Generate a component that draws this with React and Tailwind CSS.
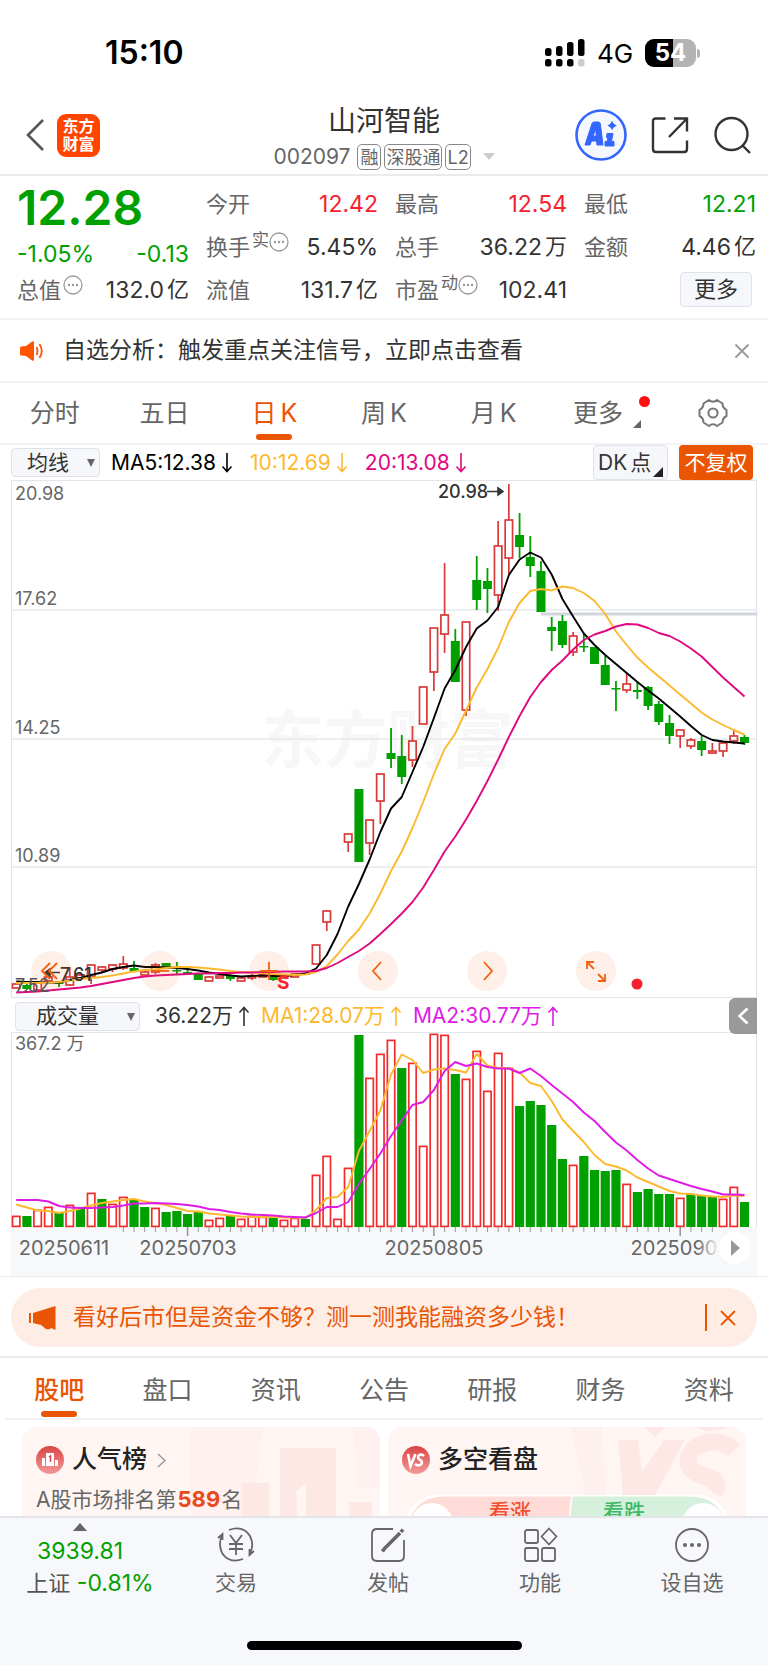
import React from 'react';

const GREEN = '#00a000';
const RED = '#d93a3a';
const VOL_RED = '#f52b2b';
const STEP = 10.71;
const FIRST_X = 16.2;

const xAt = (i) => FIRST_X + i * STEP;

// direction, body top, body bottom, wick top, wick bottom
const CANDLES = [
  ['r', 984, 988, 984, 988], ['g', 985, 989, 984, 990], ['r', 983, 990, 983, 990],
  ['r', 977, 981, 976, 982], ['g', 982, 984, 981, 987], ['r', 977, 985, 967, 986],
  ['r', 975, 978, 974, 981], ['r', 965, 977, 965, 984], ['r', 967, 970, 966, 972],
  ['r', 965, 969, 964, 972], ['r', 964, 968, 956, 970], ['g', 968, 971, 961, 971],
  ['r', 972, 975, 970, 975], ['r', 965, 972, 963, 974], ['g', 963, 967, 963, 967],
  ['g', 970, 971, 962, 974], ['g', 972, 974, 969, 974], ['g', 974, 980, 974, 980],
  ['r', 977, 981, 976, 981], ['r', 976, 978, 974, 978], ['g', 976, 979, 974, 981],
  ['r', 978, 981, 977, 981], ['r', 976, 978, 974, 980], ['r', 975, 977, 975, 977],
  ['g', 977, 980, 976, 981], ['r', 975, 978, 975, 978], ['r', 974, 977, 974, 977],
  ['g', 973, 975, 973, 975], ['r', 945, 964, 945, 964], ['r', 911, 922, 911, 931],
  ['r', 874, 874, 874, 874], ['r', 834, 842, 834, 852], ['g', 789, 862, 789, 862],
  ['r', 820, 843, 820, 855], ['r', 774, 801, 774, 824], ['g', 753, 759, 728, 768],
  ['g', 756, 777, 735, 784], ['r', 741, 760, 726, 767], ['r', 687, 724, 687, 724],
  ['r', 628, 672, 628, 691], ['r', 615, 634, 563, 653], ['g', 641, 682, 629, 682],
  ['r', 622, 710, 622, 716], ['g', 580, 600, 556, 610], ['g', 581, 589, 568, 613],
  ['r', 546, 595, 521, 611], ['r', 520, 558, 484, 574], ['g', 535, 547, 513, 558],
  ['g', 557, 566, 536, 577], ['g', 571, 612, 561, 612], ['g', 627, 631, 617, 651],
  ['g', 621, 645, 615, 648], ['r', 636, 652, 632, 656], ['g', 646, 647, 634, 652],
  ['g', 647, 664, 647, 664], ['g', 665, 685, 655, 685], ['g', 688, 689, 681, 711],
  ['r', 684, 690, 672, 693], ['g', 690, 692, 682, 699], ['g', 687, 706, 686, 710],
  ['g', 704, 722, 701, 725], ['g', 723, 736, 715, 744], ['r', 730, 736, 730, 748],
  ['r', 740, 746, 738, 749], ['g', 741, 750, 736, 756], ['r', 751, 753, 743, 753],
  ['r', 743, 751, 743, 757], ['r', 736, 741, 729, 744], ['g', 737, 743, 735, 745],
];

const MA5 = [981.5, 982, 982, 982.5, 982.5, 980, 978, 975, 972.5, 969, 967, 965.5, 967, 967, 967.5, 968, 969, 970.5, 972.5, 974, 975.5, 976.5, 976, 975.5, 976, 976, 975, 973.5, 968.5, 955, 934, 906.5, 884, 859.5, 832, 808.5, 797, 772, 747, 718, 688.5, 670, 647, 628.5, 620.5, 607, 575, 559.5, 552.5, 557.5, 574.5, 599, 616.5, 633.5, 645, 655, 664, 673, 682, 690.5, 698.5, 707.5, 716.5, 726, 735, 740, 741.5, 742.5, 743.5];
const MA10 = [983, 983, 983, 982.5, 982, 980.5, 979, 978, 977, 975.5, 973.5, 971.5, 970, 969.5, 968, 967, 967, 967.5, 968.5, 969.5, 971, 972, 972.5, 973, 974, 974.5, 975, 974.5, 972, 966, 954.5, 941, 929.5, 913.5, 893.5, 871, 851.5, 828, 802, 774, 749, 733.5, 710.5, 687.5, 669, 648, 622, 603, 591, 589, 590.5, 586.5, 588, 593, 601, 614, 631.5, 645, 657.5, 667.5, 676.5, 685.5, 694.5, 703.5, 712.5, 719.5, 725, 730, 734.5];
const MA20 = [992.5, 992, 991.5, 990.5, 989.5, 988.5, 987.5, 986, 984, 982, 980, 978, 976.5, 975.5, 975, 974.5, 974, 973.5, 973.5, 973, 973, 972.5, 972.5, 972, 972, 971.5, 971.5, 971.5, 971, 968, 963, 957, 951, 943.5, 934, 924, 913.5, 902, 887.5, 870, 851.5, 836.5, 819.5, 801, 781, 759.5, 737, 716, 697, 682, 670, 660.5, 649.5, 640, 634.5, 631, 626.5, 624, 624.5, 628, 633, 636, 641.5, 648.5, 656.5, 667, 677.5, 687, 696.5];

const VOLUMES = [
  'r1216', 'g1216', 'r1210', 'r1207', 'g1212', 'r1205', 'g1208', 'r1193', 'g1199', 'r1204',
  'r1197', 'g1200', 'g1207', 'r1208', 'g1212', 'g1211', 'g1214', 'g1211', 'r1220', 'r1218',
  'g1216', 'r1219', 'r1216', 'r1217', 'g1217', 'r1220', 'r1218', 'g1219', 'r1175', 'r1156',
  'r1219', 'r1168', 'g1035', 'r1078', 'r1054', 'r1040', 'g1068', 'r1063', 'r1146', 'r1034',
  'r1035', 'g1074', 'r1079', 'r1051', 'r1091', 'r1053', 'r1068', 'g1106', 'g1101', 'g1105',
  'g1125', 'g1159', 'r1165', 'g1156', 'g1170', 'g1171', 'g1170', 'r1184', 'g1192', 'g1189',
  'g1194', 'g1194', 'r1198', 'g1194', 'g1196', 'g1197', 'r1199', 'r1187', 'g1202',
];

const VOL_MA1 = [1204.5, 1207.5, 1210.5, 1211, 1213, 1211, 1208.5, 1205.5, 1203, 1201.5, 1200, 1199, 1201.5, 1203, 1205, 1208, 1211, 1211.5, 1213.5, 1214.5, 1215.5, 1216.5, 1217, 1217, 1217, 1217.5, 1217.5, 1218, 1210, 1198, 1197, 1187, 1151, 1131, 1110.5, 1074.5, 1054.5, 1060, 1073, 1069.5, 1068.5, 1070, 1072.5, 1054, 1065.5, 1068, 1068, 1072.5, 1083, 1086, 1101, 1119.5, 1131, 1142, 1155, 1164, 1166.5, 1170.5, 1177.5, 1182, 1186.5, 1191, 1193.5, 1194, 1195.5, 1196.5, 1197, 1195.5, 1196];
const VOL_MA2 = [1200, 1200, 1200, 1201.5, 1206, 1207.5, 1208, 1208, 1207.5, 1207, 1205.5, 1203.5, 1203.5, 1203, 1203.5, 1204, 1205, 1206.5, 1209, 1210, 1212, 1213.5, 1214.5, 1215, 1215.5, 1216.5, 1217, 1217.5, 1213, 1207, 1207, 1202, 1184, 1169, 1153.5, 1136, 1120.5, 1105, 1102, 1090, 1071, 1062, 1066, 1063.5, 1067, 1068.5, 1068.5, 1073, 1068.5, 1076, 1085, 1093.5, 1102, 1112.5, 1121, 1132, 1142.5, 1150.5, 1160, 1168.5, 1175.5, 1179, 1182.5, 1186, 1189, 1191.5, 1194.5, 1194.5, 1195];

const GRID_LINES = [
  { y: 610, label: '17.62' },
  { y: 739, label: '14.25' },
  { y: 867, label: '10.89' },
];

const PERIODS = ['分时', '五日', '日K', '周K', '月K'];
const SECTIONS = ['股吧', '盘口', '资讯', '公告', '研报', '财务', '资料'];

const Line = ({ data, color }) => (
  <polyline
    points={data.map((y, i) => `${xAt(i)},${y}`).join(' ')}
    fill="none"
    stroke={color}
    strokeWidth="1.9"
    strokeLinejoin="round"
  />
);

const Candle = ({ i, candle }) => {
  const [dir, top, bottom, high, low] = candle;
  const x = xAt(i);
  if (dir === 'g') {
    return (
      <g fill={GREEN}>
        <rect x={x - 0.9} y={high} width="1.8" height={low - high} />
        <rect x={x - 4.5} y={top} width="9" height={Math.max(bottom - top, 1.5)} />
      </g>
    );
  }
  return (
    <g fill="none" stroke={RED} strokeWidth="1.7">
      <path d={`M${x} ${high}V${top}M${x} ${bottom}V${low}`} />
      <rect x={x - 3.7} y={top} width="7.4" height={bottom - top} />
    </g>
  );
};

const PriceChart = () => (
  <svg viewBox="0 480 768 518" className="block w-full h-auto">
    <text x="261" y="762" fontSize="63" fontWeight="700" fill="#f7f7f7">东方财富</text>
    <rect x="11.5" y="480.500" width="745" height="517" fill="none" stroke="#e2e5ec" strokeWidth="1.2" />
    {GRID_LINES.map((line) => (
      <g key={line.y}>
        <path d={`M11 ${line.y}H757`} stroke="#e4e8ef" strokeWidth="1.6" />
        <text x="15" y={line.y - 5} fontSize="18" fill="#666">{line.label}</text>
      </g>
    ))}
    <text x="15" y="500" fontSize="18" fill="#666">20.98</text>
    <path d="M541 614H757" stroke="#d3d5dc" strokeWidth="3" />
    {CANDLES.map((c, i) => <Candle key={i} i={i} candle={c} />)}
    <Line data={MA5} color="#000" />
    <Line data={MA10} color="#fdb92e" />
    <Line data={MA20} color="#e0097f" />
    <text x="438" y="498" fontSize="18" fontWeight="500" fill="#333">20.98</text>
    <path d="M487 491.5H502M498 488L503 491.5L498 495Z" stroke="#333" strokeWidth="1.6" fill="#333" />
    <text x="15" y="992" fontSize="18" fill="#555">7.52</text>
    <text x="60" y="981" fontSize="18" fontWeight="500" fill="#333">7.61</text>
    <path d="M46 972.500H60M50 969L45 972.500L50 976Z" stroke="#333" strokeWidth="1.6" fill="#333" />
    <text x="277" y="989" fontSize="19" fontWeight="700" fill="#f5222d">S</text>
    <circle cx="637" cy="984" r="5.500" fill="#f5222d" />
  </svg>
);

const VolumeChart = () => (
  <svg viewBox="0 1032 768 245" className="block w-full h-auto">
    <defs>
      <linearGradient id="fadeRight" x1="0" x2="1">
        <stop offset="0" stopColor="#f7f8fa" stopOpacity="0" />
        <stop offset="1" stopColor="#f7f8fa" />
      </linearGradient>
    </defs>
    <rect x="11" y="1227" width="746" height="50" fill="#f7f8fa" />
    <path d="M11.5 1227V1032.500H756.500V1227" fill="none" stroke="#e2e5ec" strokeWidth="1.2" />
    {VOLUMES.map((v, i) => {
      const top = Number(v.slice(1));
      const x = xAt(i);
      return v[0] === 'g' ? (
        <rect key={i} x={x - 4.6} y={top} width="9.200" height={1227 - top} fill={GREEN} />
      ) : (
        <rect key={i} x={x - 3.7} y={top + 0.4} width="7.4" height={1226 - top} fill="none" stroke={VOL_RED} strokeWidth="1.7" />
      );
    })}
    <Line data={VOL_MA1} color="#fdb92e" />
    <Line data={VOL_MA2} color="#e01be8" />
    {VOLUMES.map((_, i) => {
      if (i < 10 || i > 65) return null;
      const major = i === 16 || i === 39 || i === 62;
      return <path key={i} d={`M${xAt(i)} 1227v${major ? 9 : 5}`} stroke="#999" strokeWidth={major ? 1.6 : 1} />;
    })}
    <text x="15" y="1050" fontSize="18" fill="#666">367.2 万</text>
    <g fontSize="20" fill="#666" textAnchor="middle">
      <text x="64" y="1255">20250611</text>
      <text x="188" y="1255">20250703</text>
      <text x="434" y="1255">20250805</text>
      <text x="674" y="1255">2025090</text>
    </g>
    <rect x="696" y="1238" width="24" height="22" fill="url(#fadeRight)" />
    <circle cx="735" cy="1248" r="16" fill="#fff" />
    <path d="M731 1240L740 1248L731 1256Z" fill="#999" />
    <path d="M0 1276.500H768" stroke="#e9eaf0" />
  </svg>
);

const MoreDots = () => (
  <svg width="20" height="20" viewBox="0 0 20 20" fill="none" stroke="#999" strokeWidth="1.3">
    <circle cx="10" cy="10" r="9" />
    <g fill="#999" stroke="none">
      <circle cx="6" cy="10" r="1.200" />
      <circle cx="10" cy="10" r="1.200" />
      <circle cx="14" cy="10" r="1.200" />
    </g>
  </svg>
);

const Stat = ({ label, sup, info, value, unit, color = 'text-[#333]' }) => (
  <div className="flex h-[43px] items-center justify-between">
    <div className="flex items-center gap-[2px] text-[22px] text-[#666]">
      {label}
      <span className="flex items-start self-start">
        {sup && <span className="text-[17px] leading-[18px]">{sup}</span>}
        {info && <span className="mt-px"><MoreDots /></span>}
      </span>
    </div>
    <div className={`flex gap-[3px] text-[23px] ${color}`}>
      <span>{value}</span>
      {unit && <span className="text-[22px]">{unit}</span>}
    </div>
  </div>
);

const StatusBar = () => (
  <div className="flex h-[100px] items-center justify-between pt-[6px] pr-[68px] pl-[105px]">
    <div className="text-[32px] font-semibold text-black">15:10</div>
    <div className="flex items-center">
      <svg width="40" height="28" viewBox="0 0 40 28">
        <g fill="#000">
          <rect x="0" y="9" width="6.500" height="8" rx="2.500" />
          <rect x="11" y="7" width="6.500" height="10" rx="2.500" />
          <rect x="22" y="3" width="6.500" height="14" rx="2.500" />
          <rect x="33" y="0" width="6.500" height="17" rx="2.500" />
          <rect x="0" y="20" width="6.500" height="7.500" rx="2.500" />
          <rect x="11" y="20" width="6.500" height="7.500" rx="2.500" />
          <rect x="22" y="20" width="6.500" height="7.500" rx="2.500" />
        </g>
        <rect x="33" y="20" width="6.500" height="7.500" rx="2.500" fill="#ccc" />
      </svg>
      <span className="ml-3 w-[36px] text-[26px] text-black">4G</span>
      <div className="relative ml-3 flex h-[28px] w-[51px] items-center justify-center overflow-hidden rounded-[9px] bg-[#b3b3b3]">
        <div className="absolute inset-y-0 left-0 w-[54%] bg-black" />
        <span className="relative text-[24px] font-bold text-white">54</span>
      </div>
      <div className="ml-px h-[9px] w-[3px] rounded-r-full bg-[#b3b3b3]" />
    </div>
  </div>
);

const Header = () => (
  <header className="grid h-[76px] grid-cols-[1fr_auto_1fr] items-center border-b-2 border-[#ebebeb]">
    <div className="flex items-center gap-[12px] pb-[4px] pl-[25px]">
      <button aria-label="返回">
        <svg width="20" height="32" viewBox="0 0 20 32" fill="none" stroke="#555" strokeWidth="2.600">
          <path d="M18 1L3 16L18 31" />
        </svg>
      </button>
      <div className="flex h-[43px] w-[43px] flex-col items-center justify-center rounded-[9px] bg-[#ff4400] text-[16px] leading-[18px] font-bold text-white">
        <span>东方</span>
        <span>财富</span>
      </div>
    </div>
    <div className="flex flex-col items-center pt-[2px]">
      <h1 className="text-[28px] leading-[38px] text-[#333]">山河智能</h1>
      <div className="flex h-[34px] items-center gap-[3px] text-[18px] text-[#666]">
        <span className="mr-1 text-[21px]">002097</span>
        <span className="flex h-[26px] items-center rounded-[5px] border border-[#888] px-[2px]">融</span>
        <span className="flex h-[26px] items-center rounded-[5px] border border-[#888] px-px">深股通</span>
        <span className="flex h-[26px] items-center rounded-[5px] border border-[#888] px-px">L2</span>
        <svg width="12" height="8" viewBox="0 0 12 8" className="ml-[9px]">
          <path d="M0 0H12L6 7Z" fill="#ccc" />
        </svg>
      </div>
    </div>
    <div className="flex items-center justify-end gap-[24px] pr-[17px] pb-[4px]">
      <button aria-label="AI">
        <svg width="52" height="52" viewBox="0 0 52 52">
          <circle cx="26" cy="26" r="24.500" fill="#f5f8ff" stroke="#3366ff" strokeWidth="2.600" />
          <path d="M10 36L17 14.500Q17.500 13 19 13H23.500Q25 13 25.300 14.500L28 36H22L21.600 32H16.500L15 36ZM18 27H21.200L20.800 20Z" fill="#3366ff" stroke="#3366ff" strokeLinejoin="round" />
          <path d="M32 24.500H38L36.500 32.500H39V37H30V32.500H32L33 28.500H31.500Z" fill="#3366ff" stroke="#3366ff" strokeLinejoin="round" />
          <path d="M37 11.500Q38 15 42 16.500Q38 18 37 21.500Q36 18 32.500 16.500Q36 15 37 11.500Z" fill="#3366ff" />
        </svg>
      </button>
      <button aria-label="分享">
        <svg width="38" height="38" viewBox="0 0 38 38" fill="none" stroke="#333" strokeWidth="2.400">
          <path d="M14.500 2.500H5Q2 2.500 2 5.500V33Q2 36 5 36H33Q36 36 36 33V24.500M23 2.500H36V15.500M36 2.500L18 21" />
        </svg>
      </button>
      <button aria-label="搜索">
        <svg width="38" height="38" viewBox="0 0 38 38" fill="none" stroke="#333" strokeWidth="2.400">
          <circle cx="18.500" cy="18" r="16" />
          <path d="M29 29L37 37" />
        </svg>
      </button>
    </div>
  </header>
);

const Quote = () => (
  <section className="grid grid-cols-4 gap-x-[17px] border-b-2 border-[#f3f3f5] pt-[7px] pr-[12px] pb-[6px] pl-[17px]">
    <div>
      <div className="flex h-[50px] items-center text-[48px] font-semibold text-[#00a000]">12.28</div>
      <div className="flex h-[43px] items-center justify-between text-[23px] text-[#00a000]">
        <span>-1.05%</span>
        <span>-0.13</span>
      </div>
      <div className="-mt-[7px]">
        <Stat label="总值" info value="132.0" unit="亿" />
      </div>
    </div>
    <div>
      <Stat label="今开" value="12.42" color="text-[#f5222d]" />
      <Stat label="换手" sup="实" info value="5.45%" />
      <Stat label="流值" value="131.7" unit="亿" />
    </div>
    <div>
      <Stat label="最高" value="12.54" color="text-[#f5222d]" />
      <Stat label="总手" value="36.22" unit="万" />
      <Stat label="市盈" sup="动" info value="102.41" />
    </div>
    <div>
      <Stat label="最低" value="12.21" color="text-[#00a000]" />
      <Stat label="金额" value="4.46" unit="亿" />
      <div className="flex h-[40px] items-center justify-end pr-1">
        <button className="h-[35px] w-[72px] rounded-[4px] border border-[#dfe2e8] bg-[#f6f7fa] text-[22px] leading-[30px] text-[#333]">更多</button>
      </div>
    </div>
  </section>
);

const Notice = () => (
  <div className="flex h-[63px] items-center border-b-2 border-[#f3f3f5] pr-[18px] pl-[20px]">
    <svg width="24" height="22" viewBox="0 0 24 22">
      <path d="M1 6.500Q0 7 0 8V14Q0 15 1 15.500L6 16L12 20.500Q14 21.500 14 19V3Q14 .5 12 1.500L6 6Z" fill="#ff5500" />
      <path d="M16.500 7Q18.500 11 16.500 15M19.500 4Q24 11 19.500 18" fill="none" stroke="#ff5500" strokeWidth="1.800" />
    </svg>
    <p className="ml-[19px] flex-1 text-[23px] text-[#333]">自选分析：触发重点关注信号，立即点击查看</p>
    <button aria-label="关闭">
      <svg width="16" height="16" viewBox="0 0 16 16" stroke="#999" strokeWidth="1.800">
        <path d="M1.500 1.500L14.500 14.500M14.500 1.500L1.500 14.500" />
      </svg>
    </button>
  </div>
);

const PeriodTabs = () => (
  <nav className="grid h-[62px] grid-cols-7 border-b-2 border-[#f3f3f5] text-[25px] text-[#666]">
    {PERIODS.map((name) => (
      <button
        key={name}
        className={name === '日K' ? 'relative flex items-center justify-center pt-px text-[#ea5504]' : 'flex items-center justify-center pt-px'}
      >
        {name[1] === 'K' ? <span className="flex gap-1"><span>{name[0]}</span><span>K</span></span> : name}
        {name === '日K' && <span className="absolute bottom-[3px] h-[6px] w-[36px] rounded-[3px] bg-[#ea5504]" />}
      </button>
    ))}
    <button className="relative flex items-center justify-center gap-[10px] pt-px pl-[7px]">
      更多
      <svg width="8" height="8" viewBox="0 0 8 8" className="mt-5"><path d="M0 8L8 0V8Z" fill="#666" /></svg>
      <span className="absolute top-[13px] right-[8px] h-[11px] w-[11px] rounded-full bg-[#ff1010]" />
    </button>
    <button aria-label="设置" className="flex items-center justify-center">
      <svg width="30" height="30" viewBox="0 0 30 30" fill="none" stroke="#777" strokeWidth="2">
        <path d="M11 2Q15 5.500 19 2L24.500 5.500Q24.500 10 28.500 12V18Q24.500 20 24.500 24.500L19 28Q15 24.500 11 28L5.500 24.500Q5.500 20 1.500 18V12Q5.500 10 5.500 5.500Z" strokeLinejoin="round" />
        <circle cx="15" cy="15" r="4.600" />
      </svg>
    </button>
  </nav>
);

const Arrow = ({ up }) => (
  <svg width="12" height="21" viewBox="0 0 12 21" fill="none" stroke="currentColor" strokeWidth="1.600">
    <path d={up ? 'M6 20V2M1.500 6.500L6 1.500L10.500 6.500' : 'M6 1V19M1.500 14.500L6 19.500L10.500 14.500'} />
  </svg>
);

const Picker = ({ label, option, width }) => (
  <div className="relative">
    <select
      aria-label={label}
      className={`block h-[29px] appearance-none rounded-[4px] border border-[#dfe2e8] bg-[#f6f7fa] text-[21px] leading-[26px] text-[#333] ${width}`}
    >
      <option>{option}</option>
    </select>
    <svg width="8" height="8" viewBox="0 0 8 8" className="pointer-events-none absolute top-[11px] right-[5px]">
      <path d="M0 0H8L4 8Z" fill="#666" />
    </svg>
  </div>
);

const IndicatorBar = () => (
  <div className="flex h-[35px] items-center pr-[15px] pl-[11px] text-[21px]">
    <Picker label="指标" option="均线" width="w-[89px] pl-[15px]" />
    <span className="ml-[11px] flex items-center gap-[5px] text-black">MA5:12.38<Arrow /></span>
    <span className="ml-[17px] flex items-center gap-[5px] text-[#fdb92e]">10:12.69<Arrow /></span>
    <span className="ml-[17px] flex items-center gap-[5px] text-[#e0097f]">20:13.08<Arrow /></span>
    <button className="relative ml-auto flex h-[35px] w-[75px] items-center gap-[3px] rounded-[4px] border border-[#dfe2e8] bg-[#f6f7fa] pl-[4px] text-[21px] text-[#333]">
      <span>DK</span><span>点</span>
      <svg width="10" height="10" viewBox="0 0 10 10" className="absolute right-[4px] bottom-[2px]"><path d="M0 10L10 0V10Z" fill="#222" /></svg>
    </button>
    <button className="ml-[11px] h-[35px] w-[74px] rounded-[4px] bg-[#ea5504] text-[21px] leading-[30px] text-white">不复权</button>
  </div>
);

const CONTROLS = [
  { name: '最早', d: 'M19 12L11 20L19 28M26 12L18 20L26 28' },
  { name: '缩小', d: 'M11 20H29' },
  { name: '放大', d: 'M11 20H29M20 11V29' },
  { name: '向前', d: 'M23 11L15 20L23 29' },
  { name: '向后', d: 'M17 11L25 20L17 29' },
  { name: '全屏', d: 'M11 18V11H18M11 11L18 18M29 23V30H22M29 30L22 23' },
];

const ChartControls = () => (
  <div className="absolute bottom-[7px] left-[31px] flex gap-[69px]">
    {CONTROLS.map((c) => (
      <button key={c.name} aria-label={c.name} className="h-[40px] w-[40px] rounded-full bg-[#f26020]/10">
        <svg width="40" height="40" viewBox="0 0 40 40" fill="none" stroke="#f26010" strokeWidth="1.800">
          <path d={c.d} />
        </svg>
      </button>
    ))}
  </div>
);

const VolumeBar = () => (
  <div className="flex h-[34px] items-center pt-[2px] pr-[11px] pl-[15px] text-[21px]">
    <Picker label="副图指标" option="成交量" width="w-[125px] pl-[20px]" />
    <span className="ml-[15px] flex items-center gap-[5px] text-[#333]">36.22万<Arrow up /></span>
    <span className="ml-[11px] flex items-center gap-[5px] text-[#fdb92e]">MA1:28.07万<Arrow up /></span>
    <span className="ml-[11px] flex items-center gap-[5px] text-[#e01be8]">MA2:30.77万<Arrow up /></span>
    <button aria-label="展开" className="z-10 ml-auto flex h-[36px] w-[28px] items-center justify-center rounded-l-[6px] bg-[#999]">
      <svg width="12" height="18" viewBox="0 0 12 18" fill="none" stroke="#fff" strokeWidth="2.600"><path d="M10.500 1.500L2.500 9L10.500 16.500" /></svg>
    </button>
  </div>
);

const Promo = () => (
  <div className="border-b-2 border-[#ebebee] px-[11px] pt-[11px] pb-[9px]">
    <div className="flex h-[59px] items-center rounded-full bg-[#feede5] pr-[21px] pl-[18px] text-[#ea5504]">
      <svg width="27" height="24" viewBox="0 0 27 24" fill="#ea5504">
        <path d="M0 7H2V17H0ZM4 7L26.500 0V24L22 22Q21 24 17 23L12 19L4 17Z" />
      </svg>
      <p className="ml-[17px] flex-1 text-[23px]">看好后市但是资金不够？测一测我能融资多少钱！</p>
      <span className="h-[27px] w-[2px] bg-[#ea5504]" />
      <button aria-label="关闭" className="ml-[13px]">
        <svg width="16" height="16" viewBox="0 0 16 16" stroke="#ea5504" strokeWidth="1.800">
          <path d="M1 1L15 15M15 1L1 15" />
        </svg>
      </button>
    </div>
  </div>
);

const SectionTabs = () => (
  <nav className="mx-[5px] grid h-[62px] grid-cols-7 border-b-2 border-[#f0f0f5] text-[25px] text-[#666]">
    {SECTIONS.map((name, i) => (
      <a
        key={name}
        href={`#section-${i}`}
        className={i === 0 ? 'relative flex items-center justify-center pt-[6px] font-medium text-[#ea5504]' : 'flex items-center justify-center pt-[6px]'}
      >
        {name}
        {i === 0 && <span className="absolute bottom-px h-[6px] w-[36px] rounded-[3px] bg-[#ea5504]" />}
      </a>
    ))}
  </nav>
);

const Cards = () => (
  <section className="grid h-[96px] grid-cols-2 gap-[8px] overflow-hidden px-[22px] pt-[7px]">
    <div className="relative h-[160px] overflow-hidden rounded-[14px] bg-[#fff6f4] px-[14px] pt-[16px]">
      <svg width="190" height="100" viewBox="0 0 190 100" className="absolute top-0 right-0">
        <path d="M0 0H73L66 56H52V100H0Z" fill="#fef1ef" />
        <path d="M90 21H146V100H90ZM52 56H79V100H52ZM159 75H182V100H159Z" fill="#fde8e6" />
        <path d="M163 0H190V60H167Z" fill="#fef1ef" />
        <path d="M104 66L116 56V100H107V68Z" fill="#fff6f4" />
      </svg>
      <div className="relative flex h-[34px] items-center">
        <svg width="28" height="28" viewBox="0 0 28 28">
          <defs>
            <linearGradient id="badge" x1="0" y1="0" x2="0" y2="1">
              <stop offset="0" stopColor="#da4545" />
              <stop offset="1" stopColor="#f39a98" />
            </linearGradient>
          </defs>
          <circle cx="14" cy="14" r="14" fill="url(#badge)" />
          <path d="M6 12H9V20H6ZM10 7H18V20H10ZM19 14H22V20H19Z" fill="#fff" />
          <path d="M13 11L14.500 10V16" fill="none" stroke="#da4545" strokeWidth="1.500" />
        </svg>
        <h2 className="ml-2 text-[25px] font-medium text-[#222]">人气榜</h2>
        <svg width="9" height="15" viewBox="0 0 9 15" className="ml-[10px]" fill="none" stroke="#999" strokeWidth="1.500"><path d="M1 1L8 7.500L1 14" /></svg>
      </div>
      <p className="relative mt-[6px] text-[21px] leading-[32px] text-[#666]">A股市场排名第<b className="mx-px text-[22px] font-bold text-[#ea4a1a]">589</b>名</p>
    </div>
    <div className="relative h-[160px] overflow-hidden rounded-[14px] bg-[#fff6f4] px-[14px] pt-[16px]">
      <svg width="180" height="70" viewBox="0 0 180 70" className="absolute top-0 right-0">
        <path d="M5 0H36L40 70H20Z" fill="#fef0ee" />
        <path d="M52 13H72L76 45L98 13H119L88 70H57Z" fill="#fde8e6" />
        <path d="M168 24Q160 14 145 15Q122 18 122 36Q124 46 142 50Q156 54 148 66" fill="none" stroke="#fde8e6" strokeWidth="17" />
        <path d="M78 0H100L89 10ZM128 0H165Q150 4 140 4Z" fill="#fde8e6" />
      </svg>
      <div className="relative flex h-[34px] items-center">
        <svg width="28" height="28" viewBox="0 0 28 28">
          <circle cx="14" cy="14" r="14" fill="url(#badge)" />
          <path d="M6 8L8.500 20L13.500 8" fill="none" stroke="#fff" strokeWidth="2.600" />
          <path d="M22 10Q20 8 17.500 9Q14.500 11 17.500 13.500Q21.500 15.500 19 18.500Q16 20.500 13 18" fill="none" stroke="#fff" strokeWidth="2.600" />
        </svg>
        <h2 className="ml-2 text-[25px] font-medium text-[#222]">多空看盘</h2>
      </div>
      <div className="relative mx-[3px] mt-[18px] grid grid-cols-2 text-center text-[21px] leading-[34px] font-medium">
        <svg viewBox="0 0 324 60" className="absolute inset-x-0 top-0 w-full" preserveAspectRatio="none">
          <path d="M0 60Q0 0 40 0H166L159 60Z" fill="#ffdbd8" />
          <path d="M168 0H284Q324 0 324 60H161Z" fill="#d5f0dd" />
          <path d="M0 30Q8 0 40 0H284Q316 0 324 30" fill="none" stroke="#fff" strokeWidth="3" />
          <circle cx="27" cy="29" r="21" fill="#fff" />
          <circle cx="298" cy="29" r="21" fill="#fff" />
        </svg>
        <span className="relative pl-12 text-[#f0502d]">看涨</span>
        <span className="relative pr-12 text-[#3fb868]">看跌</span>
      </div>
    </div>
  </section>
);

const TOOLS = [
  {
    name: '交易',
    icon: (
      <>
        <path d="M12 4Q26 -1 33 10Q38 20 32 29M26 33Q12 38 5 27Q1 18 5 9M1 12L5.500 8V14M37 25L32.500 29V23" />
        <path d="M13 9L19 17L25 9M12 18H26M12 23H26M19 17V29" />
      </>
    ),
  },
  {
    name: '发帖',
    icon: (
      <>
        <path d="M24 3H8Q3 3 3 8V30Q3 35 8 35H30Q35 35 35 30V14" />
        <path d="M31 7L15 23L13.500 25.500M34 3.500L32 6" strokeWidth="3.600" />
      </>
    ),
  },
  {
    name: '功能',
    icon: (
      <>
        <rect x="4" y="4" width="13" height="13" rx="2" />
        <rect x="4" y="22" width="13" height="13" rx="2" />
        <rect x="21" y="22" width="13" height="13" rx="2" />
        <path d="M28 2.500L35.500 10.500L28 18.500L20.500 10.500Z" strokeLinejoin="round" />
      </>
    ),
  },
  {
    name: '设自选',
    icon: (
      <>
        <circle cx="19" cy="19" r="16" />
        <g fill="#666" stroke="none">
          <circle cx="12" cy="19" r="2" />
          <circle cx="19" cy="19" r="2" />
          <circle cx="26" cy="19" r="2" />
        </g>
      </>
    ),
  },
];

const BottomBar = () => (
  <footer className="border-t-2 border-[#e3e5e9] bg-[#f7f8fb] pb-[15px]">
    <div className="grid grid-cols-5 pt-[8px] pl-[8px]">
      <div className="-mt-[3px] flex flex-col items-center text-[23px] leading-[32px] text-[#00a000]">
        <svg width="14" height="8" viewBox="0 0 14 8" className="mr-2"><path d="M0 8L7 0L14 8Z" fill="#666" /></svg>
        <span className="mt-[4px] mr-2">3939.81</span>
        <span className="ml-3"><span className="text-[22px] text-[#555]">上证</span> -0.81%</span>
      </div>
      {TOOLS.map((tool) => (
        <button key={tool.name} className="flex flex-col items-center text-[21px] leading-[32px] text-[#666]">
          <svg width="38" height="38" viewBox="0 0 38 38" fill="none" stroke="#666" strokeWidth="1.800">{tool.icon}</svg>
          <span className="mt-[3px]">{tool.name}</span>
        </button>
      ))}
    </div>
    <div className="mx-auto mt-[42px] h-[9px] w-[275px] rounded-full bg-black" />
  </footer>
);

export default function App() {
  return (
    <div className="bg-white font-['Inter','Noto_Sans_CJK_SC',sans-serif]">
      <StatusBar />
      <Header />
      <Quote />
      <Notice />
      <PeriodTabs />
      <IndicatorBar />
      <div className="relative">
        <PriceChart />
        <ChartControls />
      </div>
      <VolumeBar />
      <VolumeChart />
      <Promo />
      <SectionTabs />
      <Cards />
      <BottomBar />
    </div>
  );
}
